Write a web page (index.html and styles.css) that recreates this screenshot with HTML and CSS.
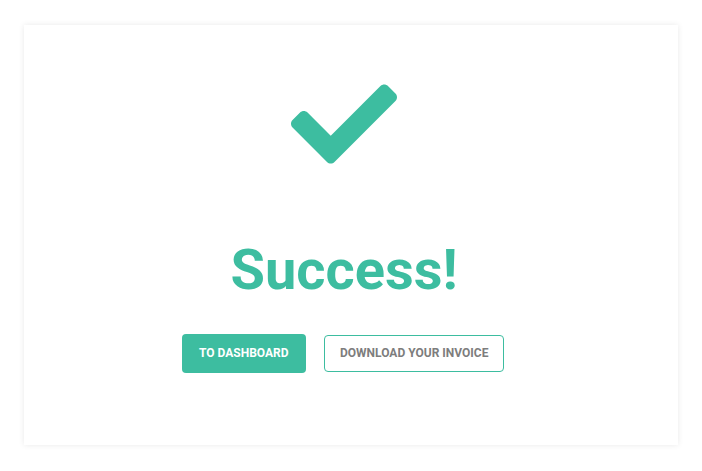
FILE: index.html
```html
<!DOCTYPE html>
<html lang="en">
<head>
<meta charset="utf-8">
<title>Success</title>
<link rel="stylesheet" href="styles.css">
</head>
<body>
<div class="page">
  <main class="card">
    <svg class="check" viewBox="0 0 512 512" aria-hidden="true">
      <path d="M173.898 439.404l-166.4-166.4c-9.997-9.997-9.997-26.206 0-36.204l36.203-36.204c9.997-9.998 26.207-9.998 36.204 0L192 312.69 432.095 72.596c9.997-9.997 26.207-9.997 36.204 0l36.203 36.204c9.997 9.997 9.997 26.206 0 36.204l-294.4 294.401c-9.998 9.997-26.207 9.997-36.204-.001z"/>
    </svg>
    <h1 class="title">Success!</h1>
    <div class="actions">
      <a class="btn btn-primary" href="#">To Dashboard</a>
      <a class="btn btn-outline" href="#">Download your invoice</a>
    </div>
  </main>
</div>
</body>
</html>
```
FILE: styles.css
```css
* { box-sizing: border-box; }
html, body { margin: 0; padding: 0; background: #ffffff; }
body { font-family: Roboto, "Liberation Sans", Arial, sans-serif; }

.page {
  padding: 25px 24px;
}

.card {
  width: 654px;
  height: 420px;
  background: #ffffff;
  box-shadow: 0 0 6px rgba(0, 0, 0, 0.09);
  display: flex;
  flex-direction: column;
  align-items: center;
  padding: 45.5px 14px 0 0;
}

.check {
  width: 106px;
  height: 106px;
  fill: #3dbda0;
  display: block;
}

.title {
  margin: 58px 0 0;
  font-size: 56px;
  line-height: 70px;
  font-weight: 700;
  color: #3dbda0;
}

.actions {
  margin-top: 29px;
  margin-right: 2px;
  display: flex;
  align-items: center;
  gap: 18px;
}

.btn {
  display: flex;
  align-items: center;
  justify-content: center;
  text-decoration: none;
  text-transform: uppercase;
  font-size: 12px;
  font-weight: 700;
  border-radius: 4px;
}

.btn-primary {
  height: 39px;
  padding: 0 17.5px;
  background: #3dbda0;
  color: #ffffff;
}

.btn-outline {
  height: 37px;
  padding: 0 15px;
  border: 1px solid #3dbda0;
  color: #7d7d7d;
  background: #ffffff;
}
```
